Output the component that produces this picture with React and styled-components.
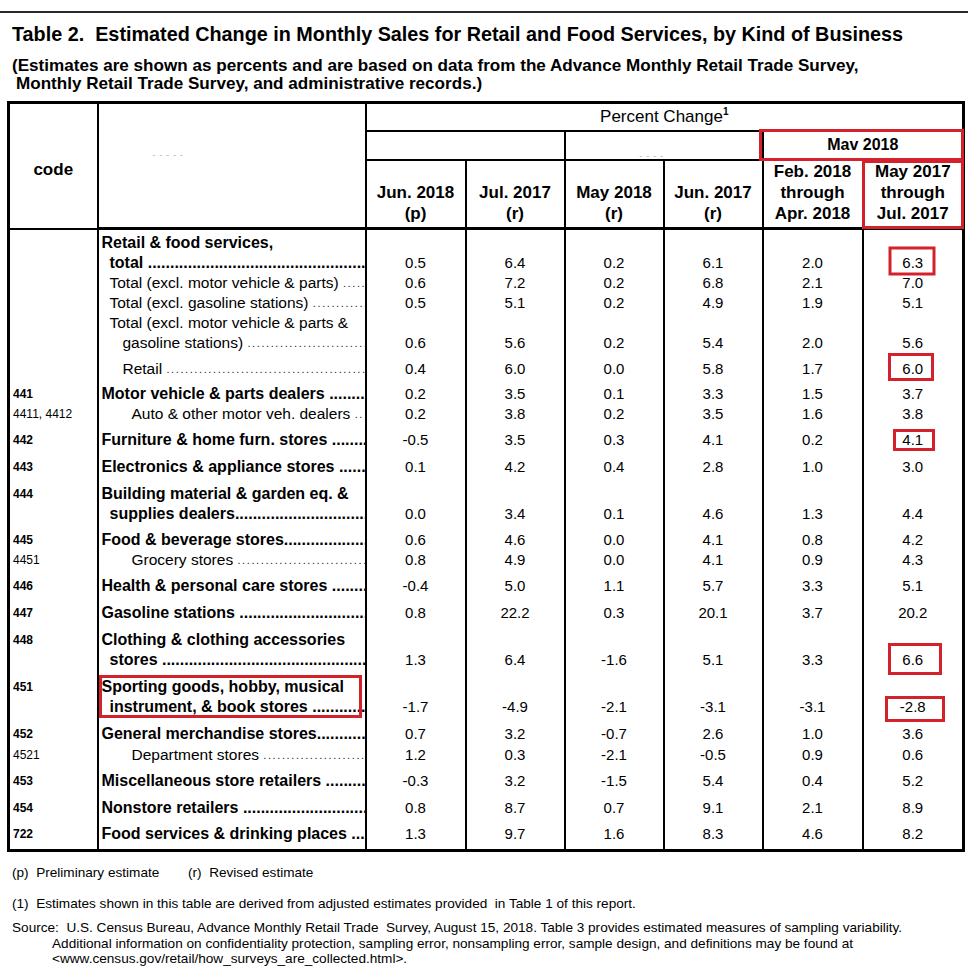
import React from "react";
import styled, { createGlobalStyle } from "styled-components";

const RED = "#d3222c";

const GlobalStyle = createGlobalStyle`
  body {
    margin: 0;
    background: #fff;
    color: #000;
    font-family: "Liberation Sans", Arial, sans-serif;
  }
`;

const Page = styled.div`
  width: 973px;
  padding-top: 11px;
`;

const TopRule = styled.div`
  width: 968px;
  height: 2px;
  background: #2a2a2a;
`;

const Title = styled.h1`
  margin: 9px 0 0 0;
  padding-left: 12px;
  font-size: 19.8px;
  line-height: 24px;
  font-weight: bold;
  white-space: pre;
`;

const Subtitle = styled.div`
  margin-top: 11px;
  padding-left: 12px;
  font-size: 17.1px;
  line-height: 18px;
  font-weight: bold;

  span {
    display: block;
    white-space: pre;
  }
  span + span {
    padding-left: 4px;
  }
`;

const Table = styled.table`
  margin: 8px 0 0 7px;
  border-collapse: collapse;
  table-layout: fixed;
  border: 3px solid #000;
`;

const Th = styled.th`
  position: relative;
  border: 2px solid #000;
  border-bottom-width: ${(p) => (p.$last ? 3 : 2)}px;
  padding: ${(p) => p.$pt || 0}px 0 3px 0;
  height: ${(p) => p.$h || 20}px;
  font-size: 17px;
  line-height: 21px;
  font-weight: ${(p) => (p.$light ? "normal" : "bold")};
  text-align: center;
  vertical-align: ${(p) => p.$va || "bottom"};

  sup {
    font-size: 10px;
    font-weight: bold;
    line-height: 0;
    vertical-align: 7px;
  }

  ${(p) =>
    p.$flag &&
    `
    &::after {
      content: "";
      position: absolute;
      top: ${p.$flag.t}px;
      left: ${p.$flag.l}px;
      right: ${p.$flag.r}px;
      bottom: ${p.$flag.b}px;
      border: 3px solid ${RED};
    }
  `}
`;

const CodeHead = styled(Th)`
  vertical-align: middle;
  padding: 8px 0 0 0;
`;

const Faint = styled.span`
  position: absolute;
  left: ${(p) => p.$x}px;
  top: ${(p) => p.$y}px;
  color: #b8b8b8;
  font-size: 8px;
  font-weight: bold;
  letter-spacing: 1px;
  line-height: 8px;
`;

const Td = styled.td`
  border-left: 2px solid #000;
  border-right: 2px solid #000;
  padding: ${(p) => p.$pad}px 0 0 0;
  font-size: 15px;
  line-height: 20px;
  text-align: center;
  vertical-align: bottom;

  tr:last-child > & {
    padding-bottom: 5px;
  }
`;

const CodeTd = styled(Td)`
  vertical-align: top;
  text-align: left;
  padding-left: 3px;
  font-size: 12px;
  font-weight: ${(p) => (p.$bold ? "bold" : "normal")};
`;

const DescTd = styled(Td)`
  position: relative;
  vertical-align: top;
  text-align: left;
  padding-left: 3px;

  ${(p) =>
    p.$flag &&
    `
    &::after {
      content: "";
      position: absolute;
      top: ${p.$pad - 2}px;
      left: 0;
      right: 3px;
      bottom: -1px;
      border: 3px solid ${RED};
    }
  `}
`;

const Line = styled.div`
  display: flex;
  padding-left: ${(p) => p.$ind || 0}px;
  white-space: pre;
  font-size: ${(p) => (p.$bold ? 16 : 15.5)}px;
  font-weight: ${(p) => (p.$bold ? "bold" : "normal")};
  line-height: 20px;
`;

const Text = styled.span`
  flex: none;
`;

const Dots = styled.span`
  flex: 1 1 auto;
  min-width: 0;
  overflow: hidden;
  white-space: nowrap;
  font-size: ${(p) => (p.$bold ? 16 : 11)}px;
  letter-spacing: ${(p) => (p.$bold ? 0 : 1.6)}px;
  color: ${(p) => (p.$bold ? "#000" : "#222")};

  &::after {
    content: "......................................................................................................";
  }
`;

const Mark = styled.span`
  position: relative;
  display: inline-block;

  &::after {
    content: "";
    position: absolute;
    left: 50%;
    top: 50%;
    width: ${(p) => p.$w}px;
    height: ${(p) => p.$h}px;
    box-sizing: border-box;
    border: 3px solid ${RED};
    transform: translate(calc(-50% + ${(p) => p.$dx || 0}px), calc(-50% + ${(p) => p.$dy || 0}px));
  }
`;

const Notes = styled.div`
  margin-top: 13px;
  padding-left: 12px;
  font-size: 13.6px;
  line-height: 16px;
`;

const Legend = styled.div`
  display: flex;
  white-space: pre;
`;

const LegendItem = styled.span`
  width: ${(p) => p.$w}px;
`;

const Footnote = styled.div`
  margin-top: 15px;
  white-space: pre;
`;

const Source = styled.div`
  margin-top: 8px;
  padding-left: 40px;
  text-indent: -40px;
  line-height: 15.5px;
  white-space: pre;
`;

const rows = [
  { pad: 3, lines: [["Retail & food services,", 0, true, false], ["total ", 8, true]], nums: ["0.5", "6.4", "0.2", "6.1", "2.0", "6.3"], box: { w: 47, h: 29, dx: -1, dy: -2 } },
  { pad: 0, lines: [["Total (excl. motor vehicle & parts) ", 8, false]], nums: ["0.6", "7.2", "0.2", "6.8", "2.1", "7.0"] },
  { pad: 0, lines: [["Total (excl. gasoline stations) ", 8, false]], nums: ["0.5", "5.1", "0.2", "4.9", "1.9", "5.1"] },
  { pad: 0, lines: [["Total (excl. motor vehicle & parts &", 8, false, false], ["gasoline stations) ", 21, false]], nums: ["0.6", "5.6", "0.2", "5.4", "2.0", "5.6"] },
  { pad: 6, lines: [["Retail ", 21, false]], nums: ["0.4", "6.0", "0.0", "5.8", "1.7", "6.0"], box: { w: 46, h: 28, dx: -2, dy: -2 } },
  { pad: 5, code: "441", lines: [["Motor vehicle & parts dealers ", 0, true]], nums: ["0.2", "3.5", "0.1", "3.3", "1.5", "3.7"] },
  { pad: 0, code: "4411, 4412", sub: true, lines: [["Auto & other motor veh. dealers ", 30, false]], nums: ["0.2", "3.8", "0.2", "3.5", "1.6", "3.8"] },
  { pad: 6, code: "442", lines: [["Furniture & home furn. stores ", 0, true]], nums: ["-0.5", "3.5", "0.3", "4.1", "0.2", "4.1"], box: { w: 42, h: 22, dx: 1, dy: 0 } },
  { pad: 7, code: "443", lines: [["Electronics & appliance stores ", 0, true]], nums: ["0.1", "4.2", "0.4", "2.8", "1.0", "3.0"] },
  { pad: 7, code: "444", lines: [["Building material & garden eq. &", 0, true, false], ["supplies dealers", 8, true]], nums: ["0.0", "3.4", "0.1", "4.6", "1.3", "4.4"] },
  { pad: 6, code: "445", lines: [["Food & beverage stores", 0, true]], nums: ["0.6", "4.6", "0.0", "4.1", "0.8", "4.2"] },
  { pad: 0, code: "4451", sub: true, lines: [["Grocery stores ", 30, false]], nums: ["0.8", "4.9", "0.0", "4.1", "0.9", "4.3"] },
  { pad: 6, code: "446", lines: [["Health & personal care stores ", 0, true]], nums: ["-0.4", "5.0", "1.1", "5.7", "3.3", "5.1"] },
  { pad: 7, code: "447", lines: [["Gasoline stations ", 0, true]], nums: ["0.8", "22.2", "0.3", "20.1", "3.7", "20.2"] },
  { pad: 7, code: "448", lines: [["Clothing & clothing accessories", 0, true, false], ["stores ", 8, true]], nums: ["1.3", "6.4", "-1.6", "5.1", "3.3", "6.6"], box: { w: 54, h: 32, dx: 2, dy: -1 } },
  { pad: 7, code: "451", flag: true, lines: [["Sporting goods, hobby, musical", 0, true, false], ["instrument, & book stores ", 8, true]], nums: ["-1.7", "-4.9", "-2.1", "-3.1", "-3.1", "-2.8"], box: { w: 60, h: 26, dx: 2, dy: 2 } },
  { pad: 7, code: "452", lines: [["General merchandise stores", 0, true]], nums: ["0.7", "3.2", "-0.7", "2.6", "1.0", "3.6"] },
  { pad: 1, code: "4521", sub: true, lines: [["Department stores ", 30, false]], nums: ["1.2", "0.3", "-2.1", "-0.5", "0.9", "0.6"] },
  { pad: 6, code: "453", lines: [["Miscellaneous store retailers ", 0, true]], nums: ["-0.3", "3.2", "-1.5", "5.4", "0.4", "5.2"] },
  { pad: 7, code: "454", lines: [["Nonstore retailers ", 0, true]], nums: ["0.8", "8.7", "0.7", "9.1", "2.1", "8.9"] },
  { pad: 6, code: "722", lines: [["Food services & drinking places ", 0, true]], nums: ["1.3", "9.7", "1.6", "8.3", "4.6", "8.2"] },
];

const heads = [
  ["Jun. 2018", "(p)"],
  ["Jul. 2017", "(r)"],
  ["May 2018", "(r)"],
  ["Jun. 2017", "(r)"],
  ["Feb. 2018", "through", "Apr. 2018"],
  ["May 2017", "through", "Jul. 2017"],
];

const widths = [89, 268, 100, 99, 99, 99, 100, 101];

function Row({ row }) {
  return (
    <tr>
      <CodeTd $pad={row.pad} $bold={!row.sub}>{row.code || ""}</CodeTd>
      <DescTd $pad={row.pad} $flag={row.flag}>
        {row.lines.map(([t, ind, bold, dots = true], i) => (
          <Line key={i} $ind={ind} $bold={bold}>
            <Text>{t}</Text>
            {dots && <Dots $bold={bold} />}
          </Line>
        ))}
      </DescTd>
      {row.nums.map((n, i) => (
        <Td key={i} $pad={row.pad}>
          {i === 5 && row.box ? (
            <Mark $w={row.box.w} $h={row.box.h} $dx={row.box.dx} $dy={row.box.dy}>{n}</Mark>
          ) : (
            n
          )}
        </Td>
      ))}
    </tr>
  );
}

export default function App() {
  return (
    <Page>
      <GlobalStyle />
      <TopRule />
      <Title>{"Table 2.  Estimated Change in Monthly Sales for Retail and Food Services, by Kind of Business"}</Title>
      <Subtitle>
        <span>(Estimates are shown as percents and are based on data from the Advance Monthly Retail Trade Survey,</span>
        <span>Monthly Retail Trade Survey, and administrative records.)</span>
      </Subtitle>

      <Table style={{ width: widths.reduce((a, b) => a + b, 0) }}>
        <colgroup>
          {widths.map((w, i) => (
            <col key={i} style={{ width: w }} />
          ))}
        </colgroup>
        <thead>
          <tr>
            <CodeHead rowSpan={3}>code</CodeHead>
            <Th rowSpan={3} $last>
              <Faint $x={54} $y={47}>- - - - -</Faint>
            </Th>
            <Th colSpan={6} $h={20} $pt={2} $light $va="middle">
              Percent Change<sup>1</sup>
            </Th>
          </tr>
          <tr>
            <Th colSpan={2} $h={24} />
            <Th colSpan={2} $h={24}>
              <Faint $x={74} $y={20}>- - - -</Faint>
            </Th>
            <Th colSpan={2} $h={24} $va="middle" style={{ fontSize: 16 }} $flag={{ t: -3, l: -5, r: -2, b: -2 }}>
              Mav 2018
            </Th>
          </tr>
          <tr>
            {heads.map((h, i) => (
              <Th key={i} $h={62} $last $flag={i === 5 ? { t: -1, l: -2, r: -2, b: -2 } : null}>
                {h.map((l, j) => (
                  <div key={j}>{l}</div>
                ))}
              </Th>
            ))}
          </tr>
        </thead>
        <tbody>
          {rows.map((r, i) => (
            <Row key={i} row={r} />
          ))}
        </tbody>
      </Table>

      <Notes>
        <Legend>
          <LegendItem $w={176}>{"(p)  Preliminary estimate"}</LegendItem>
          <span>{"(r)  Revised estimate"}</span>
        </Legend>
        <Footnote>{"(1)  Estimates shown in this table are derived from adjusted estimates provided  in Table 1 of this report."}</Footnote>
        <Source>
          {"Source:  U.S. Census Bureau, Advance Monthly Retail Trade  Survey, August 15, 2018. Table 3 provides estimated measures of sampling variability."}
          <br />
          {"Additional information on confidentiality protection, sampling error, nonsampling error, sample design, and definitions may be found at"}
          <br />
          {"<www.census.gov/retail/how_surveys_are_collected.html>."}
        </Source>
      </Notes>
    </Page>
  );
}
